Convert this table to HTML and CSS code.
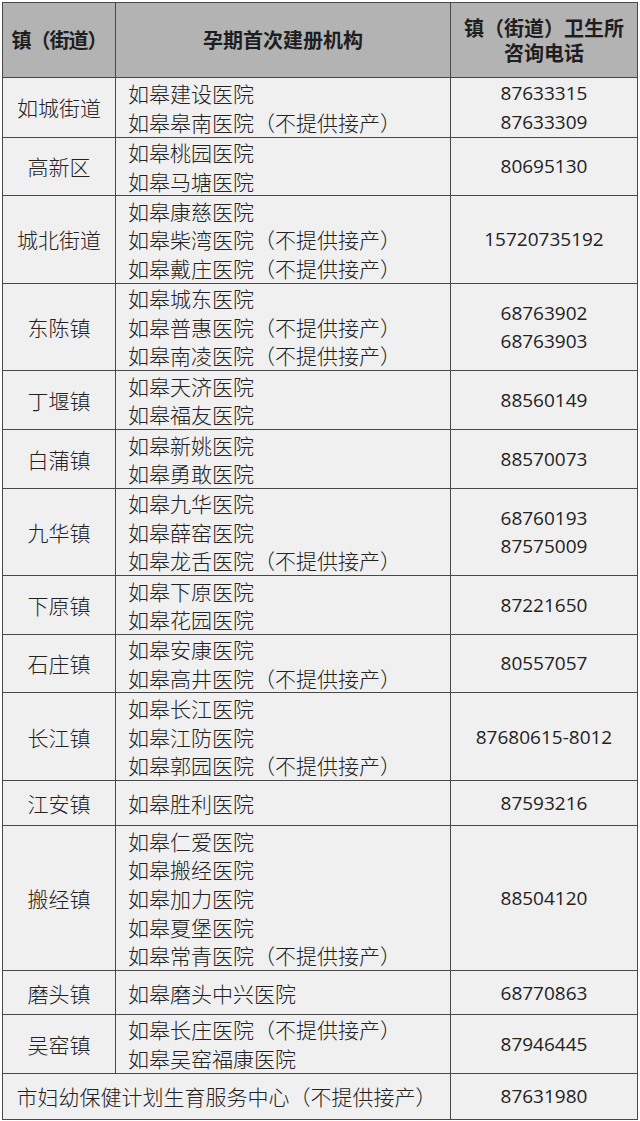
FILE: index.html
```html
<!DOCTYPE html>
<html lang="zh">
<head>
<meta charset="utf-8">
<link rel="stylesheet" href="styles.css">
</head>
<body>
<table class="tbl">
  <colgroup><col class="c1"><col class="c2"><col class="c3"></colgroup>
  <thead>
    <tr class="head">
      <th>镇（街道）</th>
      <th>孕期首次建册机构</th>
      <th><span class="hl">镇（街道）卫生所</span><span class="hl">咨询电话</span></th>
    </tr>
  </thead>
  <tbody>
    <tr class="h60"><td class="town">如城街道</td><td class="org">如皋建设医院<br>如皋皋南医院（不提供接产）</td><td class="tel">87633315<br>87633309</td></tr>
    <tr class="h58"><td class="town">高新区</td><td class="org">如皋桃园医院<br>如皋马塘医院</td><td class="tel">80695130</td></tr>
    <tr class="h88"><td class="town">城北街道</td><td class="org">如皋康慈医院<br>如皋柴湾医院（不提供接产）<br>如皋戴庄医院（不提供接产）</td><td class="tel">15720735192</td></tr>
    <tr class="h87"><td class="town">东陈镇</td><td class="org">如皋城东医院<br>如皋普惠医院（不提供接产）<br>如皋南凌医院（不提供接产）</td><td class="tel">68763902<br>68763903</td></tr>
    <tr class="h59"><td class="town">丁堰镇</td><td class="org">如皋天济医院<br>如皋福友医院</td><td class="tel">88560149</td></tr>
    <tr class="h59"><td class="town">白蒲镇</td><td class="org">如皋新姚医院<br>如皋勇敢医院</td><td class="tel">88570073</td></tr>
    <tr class="h87"><td class="town">九华镇</td><td class="org">如皋九华医院<br>如皋薛窑医院<br>如皋龙舌医院（不提供接产）</td><td class="tel">68760193<br>87575009</td></tr>
    <tr class="h59"><td class="town">下原镇</td><td class="org">如皋下原医院<br>如皋花园医院</td><td class="tel">87221650</td></tr>
    <tr class="h58"><td class="town">石庄镇</td><td class="org">如皋安康医院<br>如皋高井医院（不提供接产）</td><td class="tel">80557057</td></tr>
    <tr class="h88"><td class="town">长江镇</td><td class="org">如皋长江医院<br>如皋江防医院<br>如皋郭园医院（不提供接产）</td><td class="tel">87680615-8012</td></tr>
    <tr class="h45"><td class="town">江安镇</td><td class="org">如皋胜利医院</td><td class="tel">87593216</td></tr>
    <tr class="h145"><td class="town">搬经镇</td><td class="org">如皋仁爱医院<br>如皋搬经医院<br>如皋加力医院<br>如皋夏堡医院<br>如皋常青医院（不提供接产）</td><td class="tel">88504120</td></tr>
    <tr class="h43"><td class="town">磨头镇</td><td class="org">如皋磨头中兴医院</td><td class="tel">68770863</td></tr>
    <tr class="h58"><td class="town">吴窑镇</td><td class="org">如皋长庄医院（不提供接产）<br>如皋吴窑福康医院</td><td class="tel">87946445</td></tr>
    <tr class="h46"><td class="town" colspan="2">市妇幼保健计划生育服务中心（不提供接产）</td><td class="tel">87631980</td></tr>
  </tbody>
</table>
</body>
</html>
```

FILE: styles.css
```css
html, body {
  margin: 0;
  padding: 0;
  background: #ffffff;
}
body {
  padding: 2px 0 0 2px;
  font-family: "Noto Sans CJK SC", "Noto Sans", sans-serif;
  color: #222;
}
.tbl {
  border-collapse: collapse;
  table-layout: fixed;
  width: 635px;
  background: #f1f0f1;
  border: 1px solid #484848;
}
.c1 { width: 113px; }
.c2 { width: 335px; }
.c3 { width: 187px; }
.tbl th, .tbl td {
  border: 1px solid #484848;
  padding: 0;
  vertical-align: middle;
}
.head th {
  background: #b4b3b4;
  height: 74px;
  font-weight: bold;
  font-size: 20px;
  line-height: 26px;
  color: #1e1e1e;
  text-align: center;
}
.head th:first-child {
  letter-spacing: -1px;
}
.hl {
  display: block;
  line-height: 25px;
}
.tbl td {
  font-size: 21px;
  line-height: 28.6px;
  font-weight: 300;
}
.town {
  text-align: center;
}
.org {
  text-align: left;
  padding-left: 12px !important;
  white-space: nowrap;
}
.tel {
  text-align: center;
  font-family: "Open Sans", "Liberation Sans", sans-serif;
  font-size: 19px !important;
  font-weight: 400 !important;
}
.h43 td { height: 43px; }
.h45 td { height: 44px; }
.h46 td { height: 45px; }
.h58 td { height: 57px; }
.h59 td { height: 58px; }
.h60 td { height: 59px; }
.h87 td { height: 86px; }
.h88 td { height: 87px; }
.h145 td { height: 144px; }
```
